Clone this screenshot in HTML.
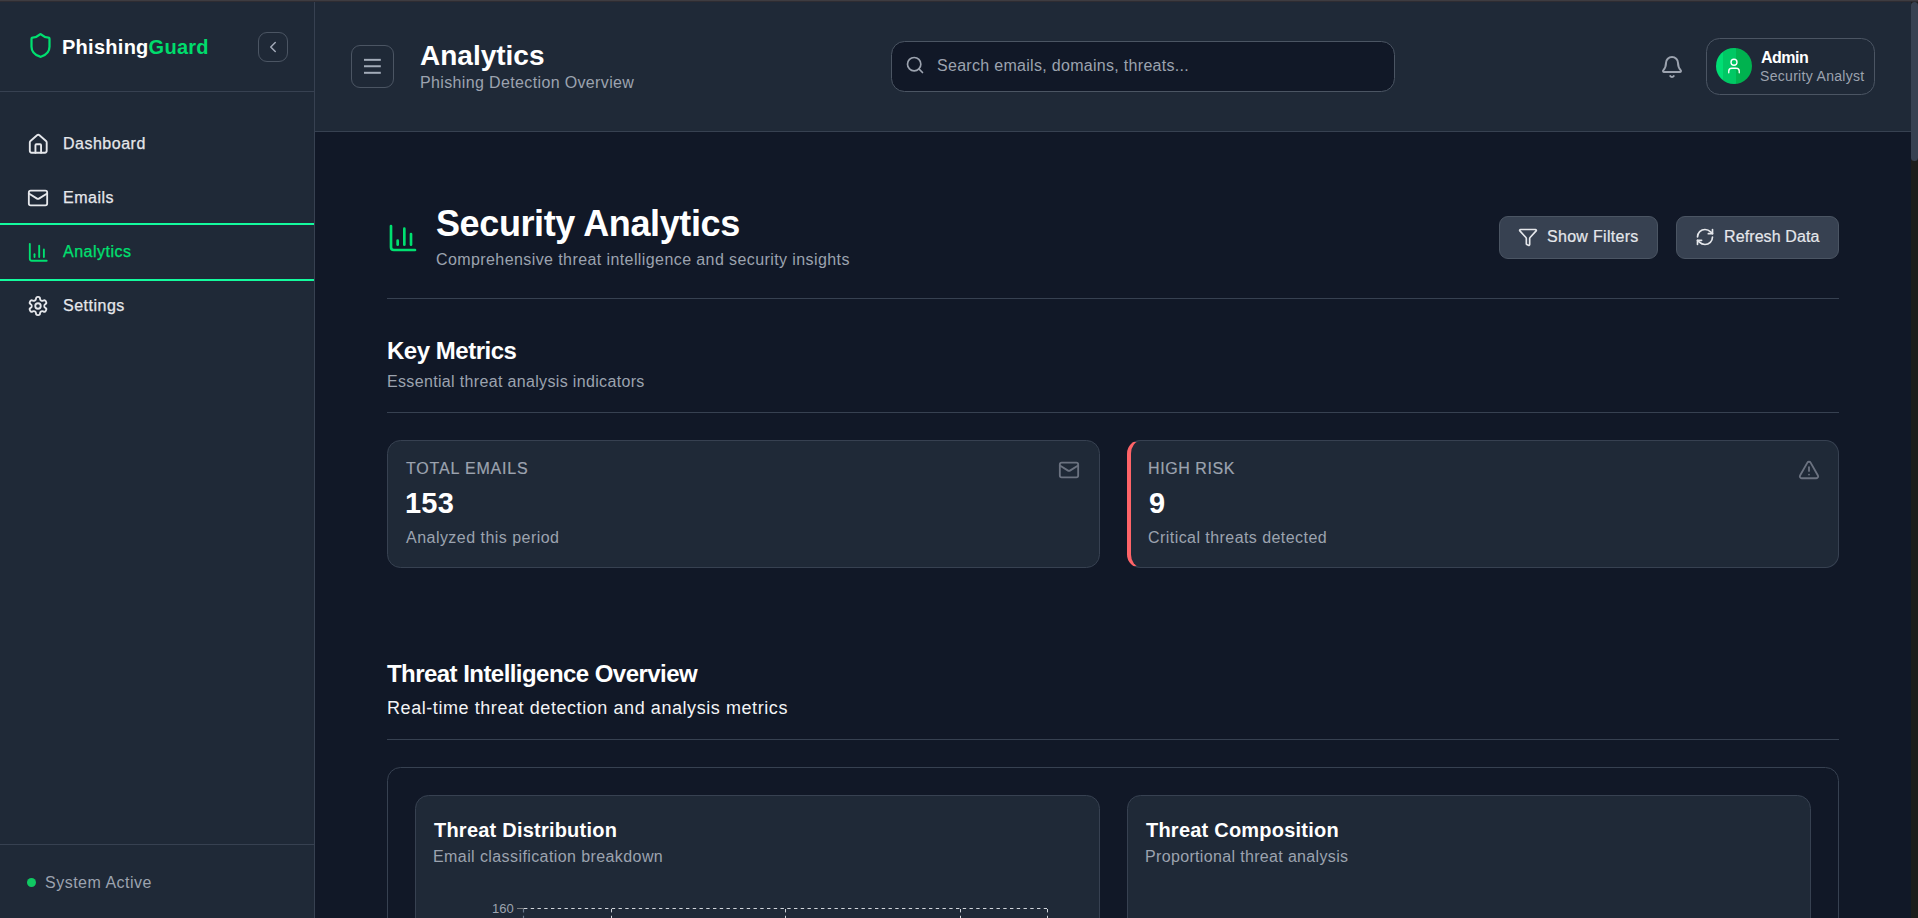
<!DOCTYPE html>
<html lang="en">
<head>
<meta charset="utf-8">
<title>PhishingGuard - Analytics</title>
<style>
*{box-sizing:border-box;margin:0;padding:0}
html,body{width:1918px;height:918px;overflow:hidden;background:#111827}
body{position:relative;font-family:"Liberation Sans",sans-serif;color:#f9fafb}
.abs{position:absolute}
.t{position:absolute;white-space:nowrap;line-height:1}
svg{position:absolute;fill:none;stroke:currentColor;stroke-width:2;stroke-linecap:round;stroke-linejoin:round;overflow:visible}
/* sidebar */
#sidebar{position:absolute;left:0;top:0;width:315px;height:918px;background:#1f2937;border-right:1px solid #374151}
#header{position:absolute;left:315px;top:0;width:1596px;height:132px;background:#1f2937;border-bottom:1px solid #374151}
#topline{position:absolute;left:0;top:0;width:1918px;height:2px;background:linear-gradient(#3e3c41 0,#3e3c41 50%,#2e2c32 50%,#2e2c32 100%);z-index:50}
#scroll{position:absolute;left:1911px;top:0;width:7px;height:918px;background:#1c1c1b;z-index:40}
#thumb{position:absolute;left:0;top:2px;width:7px;height:159px;background:#374151;border-radius:4px}
.box{position:absolute;border:1px solid #4b5563;border-radius:9px}
.nav .t{font-size:16px;letter-spacing:0.5px;color:#e5e7eb;-webkit-text-stroke:0.25px #e5e7eb}
.sec{color:#9ca3af}
.card{position:absolute;background:#1f2937;border:1px solid #374151;border-radius:13.5px}
.lbl{-webkit-text-stroke:0.2px currentColor}
.btn{position:absolute;background:#374151;border:1px solid #4b5563;border-radius:9px}
.hr{position:absolute;height:1px;background:#374151}
</style>
</head>
<body>
<div id="topline"></div>

<!-- SIDEBAR -->
<div id="sidebar">
  <svg style="left:26.6px;top:32.4px;color:#00e070" width="27" height="27" viewBox="0 0 24 24"><path d="M20 13c0 5-3.5 7.5-7.66 8.95a1 1 0 0 1-.67-.01C7.5 20.5 4 18 4 13V6a1 1 0 0 1 1-1c2 0 4.5-1.2 6.24-2.72a1.17 1.17 0 0 1 1.52 0C14.51 3.81 17 5 19 5a1 1 0 0 1 1 1z"/></svg>
  <div class="t" style="left:62px;top:37px;font-size:20px;font-weight:700;color:#fff;letter-spacing:0.27px">Phishing<span style="color:#00dc6c">Guard</span></div>
  <div class="box" style="left:258px;top:32px;width:30px;height:30px;border-radius:9px"></div>
  <svg style="left:264px;top:38px;color:#a3aab8;stroke-width:2" width="18" height="18" viewBox="0 0 24 24"><path d="m15 18-6-6 6-6"/></svg>
  <div class="hr" style="left:0;top:91px;width:314px"></div>

  <div class="nav">
    <svg style="left:27px;top:133px;color:#e5e7eb" width="22.5" height="22.5" viewBox="0 0 24 24"><path d="M15 21v-8a1 1 0 0 0-1-1h-4a1 1 0 0 0-1 1v8"/><path d="M3 10a2 2 0 0 1 .709-1.528l7-5.999a2 2 0 0 1 2.582 0l7 5.999A2 2 0 0 1 21 10v9a2 2 0 0 1-2 2H5a2 2 0 0 1-2-2z"/></svg>
    <div class="t" style="left:63px;top:136px">Dashboard</div>

    <svg style="left:27px;top:187px;color:#e5e7eb" width="22" height="22" viewBox="0 0 24 24"><rect width="20" height="16" x="2" y="4" rx="2"/><path d="m22 7-8.97 5.7a1.94 1.94 0 0 1-2.06 0L2 7"/></svg>
    <div class="t" style="left:63px;top:190px">Emails</div>

    <div class="abs" style="left:0;top:223px;width:314px;height:2px;background:#14fb9e"></div>
    <svg style="left:27px;top:241px;color:#00e070" width="22.5" height="22.5" viewBox="0 0 24 24"><path d="M3 3v16a2 2 0 0 0 2 2h16"/><path d="M18 17V9"/><path d="M13 17V5"/><path d="M8 17v-3"/></svg>
    <div class="t" style="left:63px;top:244px;color:#00e070;-webkit-text-stroke:0.25px #00e070">Analytics</div>
    <div class="abs" style="left:0;top:279px;width:314px;height:2px;background:#14fb9e"></div>

    <svg style="left:27px;top:295px;color:#e5e7eb" width="22" height="22" viewBox="0 0 24 24"><path d="M12.22 2h-.44a2 2 0 0 0-2 2v.18a2 2 0 0 1-1 1.73l-.43.25a2 2 0 0 1-2 0l-.15-.08a2 2 0 0 0-2.730.73l-.22.38a2 2 0 0 0 .73 2.73l.15.1a2 2 0 0 1 1 1.72v.51a2 2 0 0 1-1 1.74l-.15.09a2 2 0 0 0-.73 2.73l.22.38a2 2 0 0 0 2.73.73l.15-.08a2 2 0 0 1 2 0l.43.25a2 2 0 0 1 1 1.73V20a2 2 0 0 0 2 2h.44a2 2 0 0 0 2-2v-.18a2 2 0 0 1 1-1.73l.43-.25a2 2 0 0 1 2 0l.15.08a2 2 0 0 0 2.73-.73l.22-.39a2 2 0 0 0-.73-2.73l-.15-.08a2 2 0 0 1-1-1.74v-.5a2 2 0 0 1 1-1.74l.15-.09a2 2 0 0 0 .73-2.73l-.22-.38a2 2 0 0 0-2.73-.73l-.15.08a2 2 0 0 1-2 0l-.43-.25a2 2 0 0 1-1-1.73V4a2 2 0 0 0-2-2z"/><circle cx="12" cy="12" r="3"/></svg>
    <div class="t" style="left:63px;top:298px">Settings</div>
  </div>

  <div class="hr" style="left:0;top:844px;width:314px"></div>
  <div class="abs" style="left:27px;top:878px;width:9px;height:9px;border-radius:50%;background:#10c862"></div>
  <div class="t sec" style="left:45px;top:875px;font-size:16px;letter-spacing:0.5px">System Active</div>
</div>

<!-- HEADER -->
<div id="header"></div>
<div class="box" style="left:351px;top:45px;width:43px;height:43px;border-radius:9px"></div>
<svg style="left:360px;top:54px;color:#a3acb9;stroke-linecap:butt" width="25" height="25" viewBox="0 0 25 25"><path d="M4 5.85h16.8"/><path d="M4 12.25h16.8"/><path d="M4 18.8h16.8"/></svg>
<div class="t" style="left:420px;top:42px;font-size:28px;font-weight:700;color:#fff">Analytics</div>
<div class="t sec" style="left:420px;top:75px;font-size:16px;letter-spacing:0.36px">Phishing Detection Overview</div>

<div class="abs" style="left:891px;top:41px;width:504px;height:51px;background:#111827;border:1px solid #4b5563;border-radius:13.5px"></div>
<svg style="left:905px;top:55.4px;color:#9ca3af" width="20" height="20" viewBox="0 0 24 24"><circle cx="11" cy="11" r="8"/><path d="m21 21-4.3-4.3"/></svg>
<div class="t sec" style="left:937px;top:58px;font-size:16px;letter-spacing:0.3px">Search emails, domains, threats...</div>

<svg style="left:1660px;top:55px;color:#9ca3af" width="24" height="24" viewBox="0 0 24 24"><path d="M10.268 21a2 2 0 0 0 3.464 0"/><path d="M3.262 15.326A1 1 0 0 0 4 17h16a1 1 0 0 0 .74-1.673C19.41 13.956 18 12.499 18 8A6 6 0 0 0 6 8c0 4.499-1.411 5.956-2.738 7.326"/></svg>
<div class="abs" style="left:1706px;top:38px;width:169px;height:57px;border:1px solid #4b5563;border-radius:13.5px"></div>
<div class="abs" style="left:1716px;top:48px;width:36px;height:36px;border-radius:50%;background:linear-gradient(to right,#00de74 0,#00de74 20%,#00c864 20%,#00c864 56%,#00b24f 56%,#00b24f 100%)"></div>
<svg style="left:1725px;top:57px;color:#fff;stroke-width:1.8" width="18" height="18" viewBox="0 0 24 24"><path d="M19 21v-2a4 4 0 0 0-4-4H9a4 4 0 0 0-4 4v2"/><circle cx="12" cy="7" r="4"/></svg>
<div class="t" style="left:1761px;top:50px;font-size:16px;font-weight:700;color:#fff;letter-spacing:-0.5px">Admin</div>
<div class="t sec" style="left:1760px;top:69px;font-size:14px;letter-spacing:0.31px">Security Analyst</div>

<!-- MAIN -->
<svg style="left:387px;top:222px;color:#00e070" width="32" height="32" viewBox="0 0 24 24"><path d="M3 3v16a2 2 0 0 0 2 2h16"/><path d="M18 17V9"/><path d="M13 17V5"/><path d="M8 17v-3"/></svg>
<div class="t" style="left:436px;top:206px;font-size:36px;font-weight:700;color:#fff;letter-spacing:-0.39px">Security Analytics</div>
<div class="t sec" style="left:436px;top:252px;font-size:16px;letter-spacing:0.41px">Comprehensive threat intelligence and security insights</div>

<div class="btn" style="left:1499px;top:216px;width:159px;height:43px"></div>
<svg style="left:1518px;top:227px;color:#e5e7eb" width="20" height="20" viewBox="0 0 24 24"><path d="M10 20a1 1 0 0 0 .553.895l2 1A1 1 0 0 0 14 21v-7a2 2 0 0 1 .517-1.341L21.74 4.67A1 1 0 0 0 21 3H3a1 1 0 0 0-.742 1.67l7.225 7.989A2 2 0 0 1 10 14z"/></svg>
<div class="t" style="left:1547px;top:229px;font-size:16px;color:#e5e7eb;letter-spacing:0.3px;-webkit-text-stroke:0.2px #e5e7eb">Show Filters</div>
<div class="btn" style="left:1676px;top:216px;width:163px;height:43px"></div>
<svg style="left:1695px;top:227px;color:#e5e7eb" width="20" height="20" viewBox="0 0 24 24"><path d="M3 12a9 9 0 0 1 9-9 9.75 9.75 0 0 1 6.74 2.74L21 8"/><path d="M21 3v5h-5"/><path d="M21 12a9 9 0 0 1-9 9 9.75 9.75 0 0 1-6.74-2.74L3 16"/><path d="M8 16H3v5"/></svg>
<div class="t" style="left:1724px;top:229px;font-size:16px;color:#e5e7eb;letter-spacing:0.1px;-webkit-text-stroke:0.2px #e5e7eb">Refresh Data</div>

<div class="hr" style="left:387px;top:298px;width:1452px"></div>

<div class="t" style="left:387px;top:339px;font-size:24px;font-weight:700;color:#fff;letter-spacing:-0.48px">Key Metrics</div>
<div class="t sec" style="left:387px;top:374px;font-size:16px;letter-spacing:0.34px">Essential threat analysis indicators</div>
<div class="hr" style="left:387px;top:412px;width:1452px"></div>

<div class="card" style="left:387px;top:440px;width:713px;height:128px"></div>
<div class="t sec" style="left:406px;top:461px;font-size:16px;letter-spacing:0.83px;-webkit-text-stroke:0.2px #9ca3af">TOTAL EMAILS</div>
<svg style="left:1058px;top:459px;color:#6b7280" width="22" height="22" viewBox="0 0 24 24"><rect width="20" height="16" x="2" y="4" rx="2"/><path d="m22 7-8.97 5.7a1.94 1.94 0 0 1-2.06 0L2 7"/></svg>
<div class="t" style="left:405px;top:489px;font-size:29px;font-weight:700;color:#fff;letter-spacing:0.2px">153</div>
<div class="t sec" style="left:406px;top:530px;font-size:16px;letter-spacing:0.47px">Analyzed this period</div>

<div class="card" style="left:1127px;top:440px;width:712px;height:128px;border-left:4px solid #ff6468"></div>
<div class="t sec" style="left:1148px;top:461px;font-size:16px;letter-spacing:0.58px;-webkit-text-stroke:0.2px #9ca3af">HIGH RISK</div>
<svg style="left:1798px;top:459px;color:#6b7280" width="22" height="22" viewBox="0 0 24 24"><path d="m21.73 18-8-14a2 2 0 0 0-3.48 0l-8 14A2 2 0 0 0 4 21h16a2 2 0 0 0 1.73-3"/><path d="M12 9v4"/><path d="M12 17h.01"/></svg>
<div class="t" style="left:1149px;top:489px;font-size:29px;font-weight:700;color:#fff">9</div>
<div class="t sec" style="left:1148px;top:530px;font-size:16px;letter-spacing:0.44px">Critical threats detected</div>

<div class="t" style="left:387px;top:662px;font-size:24px;font-weight:700;color:#fff;letter-spacing:-0.55px">Threat Intelligence Overview</div>
<div class="t" style="left:387px;top:699px;font-size:18px;color:#f3f4f6;letter-spacing:0.57px">Real-time threat detection and analysis metrics</div>
<div class="hr" style="left:387px;top:739px;width:1452px"></div>

<div class="abs" style="left:387px;top:767px;width:1452px;height:400px;border:1px solid #374151;border-radius:13.5px"></div>
<div class="card" style="left:415px;top:795px;width:685px;height:400px"></div>
<div class="t" style="left:434px;top:820px;font-size:20px;font-weight:700;color:#fff;letter-spacing:0.22px">Threat Distribution</div>
<div class="t sec" style="left:433px;top:849px;font-size:16px;letter-spacing:0.41px">Email classification breakdown</div>
<div class="card" style="left:1127px;top:795px;width:684px;height:400px"></div>
<div class="t" style="left:1146px;top:820px;font-size:20px;font-weight:700;color:#fff;letter-spacing:0.22px">Threat Composition</div>
<div class="t sec" style="left:1145px;top:849px;font-size:16px;letter-spacing:0.34px">Proportional threat analysis</div>

<!-- chart top -->
<div class="t sec" style="left:492px;top:902px;font-size:13px">160</div>
<svg style="left:0;top:0;stroke-linecap:butt" width="1918" height="918" viewBox="0 0 1918 918">
  <line x1="517" y1="908.5" x2="524" y2="908.5" stroke="#7a7d80" stroke-width="1"/>
  <line x1="524" y1="908.5" x2="1047" y2="908.5" stroke="#d1d5db" stroke-width="1" stroke-dasharray="3.375 3.375"/>
  <line x1="523.5" y1="909" x2="523.5" y2="918" stroke="#6b7a8c" stroke-width="1.2" stroke-dasharray="3.375 3.375"/>
  <line x1="611.5" y1="909" x2="611.5" y2="918" stroke="#d1d5db" stroke-width="1" stroke-dasharray="3.375 3.375"/>
  <line x1="785.5" y1="909" x2="785.5" y2="918" stroke="#d1d5db" stroke-width="1" stroke-dasharray="3.375 3.375"/>
  <line x1="960.5" y1="909" x2="960.5" y2="918" stroke="#d1d5db" stroke-width="1" stroke-dasharray="3.375 3.375"/>
  <line x1="1047.5" y1="909" x2="1047.5" y2="918" stroke="#d1d5db" stroke-width="1" stroke-dasharray="3.375 3.375"/>
</svg>

<div id="scroll"><div id="thumb"></div></div>
</body>
</html>
